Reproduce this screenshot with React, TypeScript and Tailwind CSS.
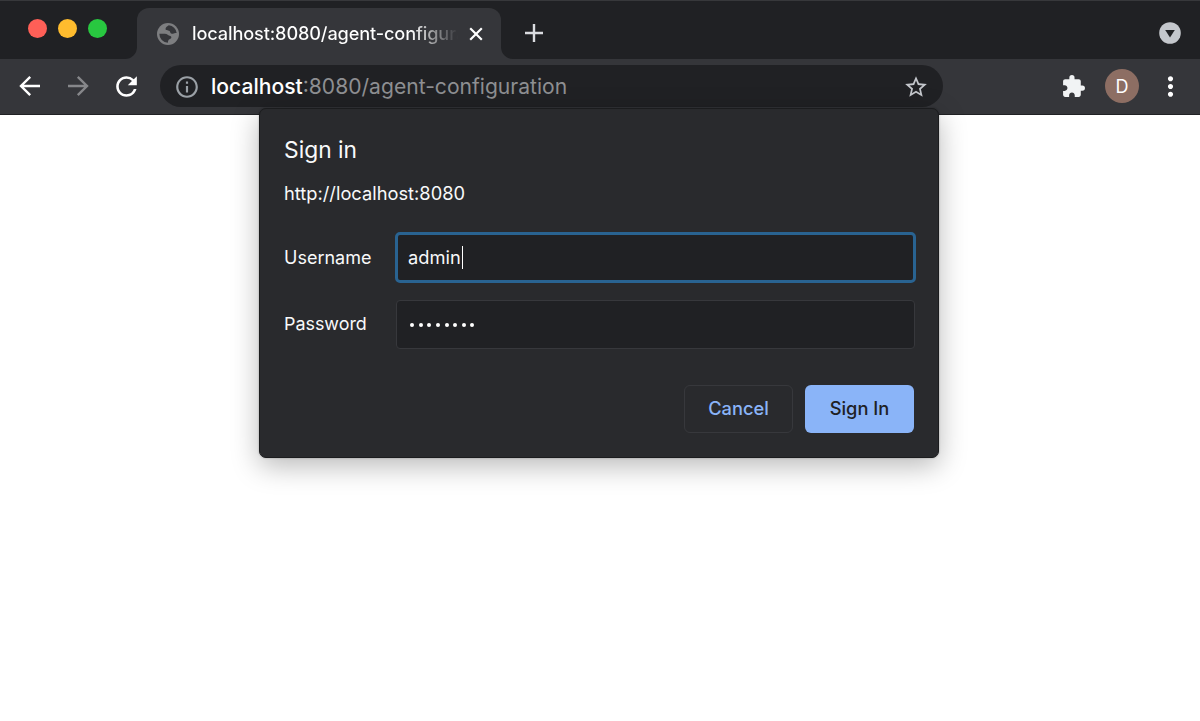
import { MdRefresh, MdInfoOutline, MdStarBorder, MdExtension, MdMoreVert } from "react-icons/md";

function TabFlare({ flip = false }: { flip?: boolean }) {
  return (
    <svg width="12" height="12" viewBox="0 0 12 12" className={flip ? "-scale-x-100" : ""}>
      <path d="M12 0V12H0A12 12 0 0 0 12 0Z" fill="#35363a" />
    </svg>
  );
}

function Globe() {
  return (
    <svg width="22" height="22" viewBox="0 0 16 16" className="ml-[3px] shrink-0">
      <circle cx="8" cy="8" r="8" fill="#7d7e80" />
      <path
        d="M8.6 1.7C7.6 2.6 6.2 3 6.2 4.4c0 1.3 1.6 1 2.6 1.3.9.3.6 1.9 1.9 2.1 1.3.2 1.5-.9 3.6-.5A6.4 6.4 0 0 0 8.6 1.7ZM1.7 7.9h4c1.9 0 2.3 1.4 4 1.6.9.1 1.1 1.6.1 2-1 .4-1.8.7-1.9 2.9A6.4 6.4 0 0 1 1.7 7.9Z"
        fill="#35363a"
      />
    </svg>
  );
}

function Arrow({ forward = false }: { forward?: boolean }) {
  return (
    <svg
      width="22"
      height="22"
      viewBox="0 0 22 22"
      fill="none"
      strokeWidth="2.4"
      className={forward ? "ml-[26px] -scale-x-100 stroke-[#86878a]" : "stroke-white"}
    >
      <path d="M21 11H2.5M11.2 1.8L2 11L11.2 20.2" />
    </svg>
  );
}

function TabStrip() {
  return (
    <div className="flex h-[59px] border-t border-[#37383b] bg-[#202124]">
      <div className="flex w-[125px] gap-[11px] pt-[18px] pl-[28px]">
        <span className="size-[19px] rounded-full bg-[#ff5f57]" />
        <span className="size-[19px] rounded-full bg-[#febc2e]" />
        <span className="size-[19px] rounded-full bg-[#28c840]" />
      </div>
      <div className="flex items-end">
        <TabFlare />
        <div className="flex h-[51px] w-[364px] items-center rounded-t-[12px] bg-[#35363a] pl-[17px]">
          <Globe />
          <span className="relative -top-px ml-[13px] w-[266px] overflow-hidden bg-linear-to-r from-white from-82% to-transparent to-100% bg-clip-text text-[18.2px] leading-6 font-medium tracking-[-0.15px] whitespace-nowrap text-transparent">
            localhost:8080/agent-configuration
          </span>
          <svg width="14" height="14" viewBox="0 0 14 14" className="ml-[11px] shrink-0">
            <path d="M1.2 1.2L12.8 12.8M12.8 1.2L1.2 12.8" stroke="#fff" strokeWidth="2.2" />
          </svg>
        </div>
        <TabFlare flip />
      </div>
      <svg width="18" height="18" viewBox="0 0 18 18" className="mt-[23px] ml-[12px]">
        <path d="M9 0V18M0 9H18" stroke="#dadce0" strokeWidth="2.4" />
      </svg>
      <svg width="22" height="22" viewBox="0 0 22 22" className="mt-[21px] mr-[19px] ml-auto">
        <circle cx="11" cy="11" r="10.8" fill="#c4c7cc" />
        <path d="M6.2 8H15.8L11 15.6Z" fill="#202124" />
      </svg>
    </div>
  );
}

function Toolbar() {
  return (
    <div className="flex h-[56px] items-center border-b border-[#202124] bg-[#35363a] pb-px pl-[19px]">
      <Arrow />
      <Arrow forward />
      <MdRefresh className="ml-[22px] size-[31px] text-white" />
      <div className="ml-[18px] flex h-[42px] w-[783px] items-center rounded-full bg-[#202124] pt-px pr-[14px] pl-[14px]">
        <MdInfoOutline className="size-[26px] text-[#9aa0a6]" />
        <span className="ml-[11px] text-[21.1px] leading-7 whitespace-nowrap text-[#8e8f92]">
          <span className="font-medium text-white">localhost</span>:8080/agent-configuration
        </span>
        <MdStarBorder className="ml-auto size-[26px] text-[#c4c7cc]" />
      </div>
      <MdExtension className="ml-[118px] size-[25px] text-[#f1f3f4]" />
      <span className="ml-[19px] flex size-[34px] items-center justify-center rounded-full bg-[#8d6e63] text-[18px] text-white">D</span>
      <MdMoreVert className="ml-[16px] size-[31px] text-white" />
    </div>
  );
}

function SignInDialog() {
  return (
    <div className="absolute top-[108px] left-[259px] h-[350px] w-[680px] rounded-[7px] border border-[#1b1c1e] bg-[#292a2d] px-[24px] text-[18.3px] text-[#f8f9fa] shadow-[0_8px_28px_rgba(0,0,0,0.28),0_0_2px_rgba(0,0,0,0.3)]">
      <h1 className="mt-[26px] text-[22.8px] leading-[30px]">Sign in</h1>
      <p className="mt-[16px] leading-6">http://localhost:8080</p>
      <div className="mt-[27px] flex items-center">
        <span className="w-[111px] shrink-0 text-[18px]">Username</span>
        <div className="flex h-[51px] w-[521px] shrink-0 items-center rounded-[5px] border-[3px] border-[#296391] bg-[#202124] pl-[10px]">
          admin
          <span className="ml-px h-[23px] w-px bg-white" />
        </div>
      </div>
      <div className="mt-[17px] flex items-center">
        <span className="w-[112px] shrink-0 text-[17.9px]">Password</span>
        <div className="flex h-[49px] w-[519px] shrink-0 items-center gap-[4.65px] rounded-[4px] border border-[#37383c] bg-[#202124] pl-[13px]">
          {Array.from({ length: 8 }, (_, i) => (
            <span key={i} className="size-[4px] rounded-full bg-white" />
          ))}
        </div>
      </div>
      <div className="mt-[36px] flex gap-[12px] pl-[400px] font-medium">
        <button className="h-[48px] w-[109px] shrink-0 rounded-[6px] border border-[#37383c] text-[#8ab4f8]">Cancel</button>
        <button className="h-[48px] w-[109px] shrink-0 rounded-[6px] bg-[#8ab4f8] text-[#202124]">Sign In</button>
      </div>
    </div>
  );
}

export default function App() {
  return (
    <div className="relative h-[721px] w-[1200px] overflow-hidden bg-white font-['Inter',sans-serif]">
      <TabStrip />
      <Toolbar />
      <SignInDialog />
    </div>
  );
}
